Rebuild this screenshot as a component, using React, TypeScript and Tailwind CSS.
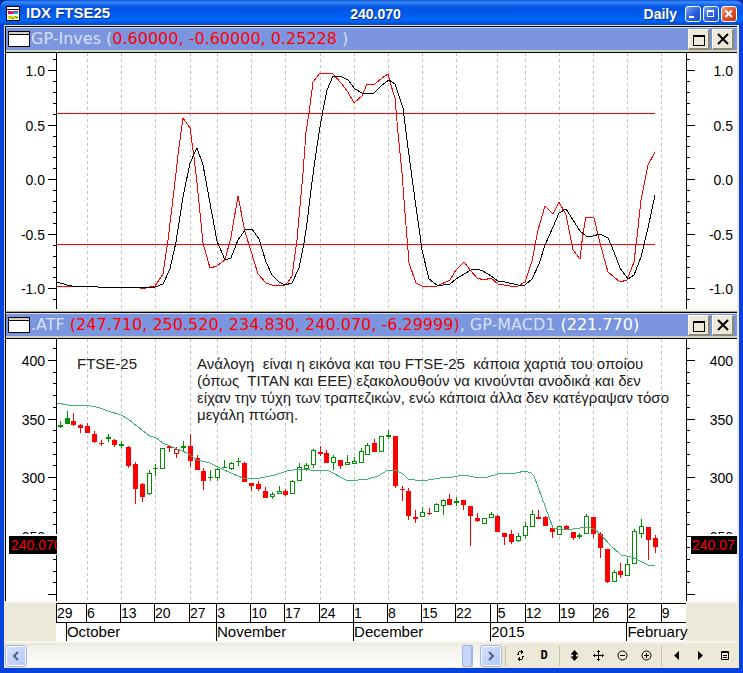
import React from "react";

type CandleKind = "down" | "up" | "flat" | "openDown";

// x, high, low, body top, body bottom, kind
type Candle = [number, number, number, number, number, CandleKind];

const gridLines = [
  87, 121, 155, 190, 217, 251, 285, 320, 354, 388, 422, 456, 497, 525, 559, 593,
  627, 661,
];

const fastLine =
  "57,286 72,286 98,287 139,287 140,288 146,288 153,286 155,286 163,274 168,240 172,207 176,173 179,147 183,118 190,128 194,157 197,183 203,243 210,268 217,266 225,260 231,237 238,196 245,232 251,251 258,274 266,283 272,285 285,285 288,282 292,276 297,240 299,217 303,173 306,132 309,113 313,82 320,73 333,74 341,83 348,92 354,103 362,96 367,84 375,84 382,78 388,74 390,82 395,98 398,133 402,173 405,213 408,250 409,263 416,283 422,286 430,287 437,286 450,280 456,270 464,262 471,271 477,278 484,280 491,278 498,284 504,285 510,286 518,286 525,282 532,261 538,230 545,206 553,214 559,202 566,215 573,250 580,259 583,233 586,217 594,218 600,243 608,272 620,282 627,280 634,262 637,237 641,200 645,180 648,165 655,152";

const slowLine =
  "57,282 67,285 72,286 98,287 155,287 163,284 170,269 176,242 183,197 190,163 197,148 203,165 210,203 217,241 225,260 231,258 238,240 245,230 252,229 259,239 266,262 272,275 279,282 285,285 292,283 299,268 304,243 307,223 311,190 315,160 319,133 323,110 327,90 333,76 340,76 348,80 355,89 362,93 367,94 374,93 382,85 389,80 395,84 403,108 407,140 411,170 416,207 419,228 422,250 429,279 437,285 443,285 450,284 456,279 464,274 471,270 477,269 483,271 491,276 498,281 505,282 518,285 525,285 532,279 539,264 545,245 553,227 559,213 566,209 573,220 580,231 586,236 593,236 600,234 608,238 614,252 620,268 628,279 634,275 641,257 648,228 655,195";

const macdLine =
  "57,403 68,405 87,405 100,408 108,411 121,415 128,419 138,427 150,436 156,438 163,443 177,449 187,453 197,460 210,463 220,468 233,474 243,478 260,478 275,475 287,471 300,469 310,470 327,470 348,481 368,479 378,476 388,470 397,471 403,474 408,479 422,481 440,478 453,477 463,475 480,478 488,477 498,474 516,473 525,471 531,473 534,476 553,528 563,530 573,529 588,527 594,529 601,535 610,545 621,555 631,557 636,559 648,565 655,566";

const candles: Candle[] = [
  [60, 421, 428, 425, 427, "flat"],
  [67, 411, 424, 418, 424, "flat"],
  [73, 413, 426, 421, 425, "down"],
  [80, 424, 433, 425, 428, "down"],
  [87, 423, 433, 426, 433, "down"],
  [94, 431, 443, 434, 442, "down"],
  [101, 440, 446, 443, 444, "down"],
  [108, 434, 442, 437, 439, "flat"],
  [114, 439, 447, 440, 445, "down"],
  [121, 441, 448, 444, 446, "flat"],
  [128, 446, 468, 447, 466, "down"],
  [135, 462, 504, 464, 489, "down"],
  [142, 483, 502, 484, 497, "down"],
  [149, 470, 495, 473, 494, "up"],
  [155, 464, 476, 468, 469, "flat"],
  [162, 448, 469, 448, 469, "up"],
  [169, 445, 452, 446, 448, "down"],
  [176, 447, 458, 449, 454, "openDown"],
  [183, 441, 451, 446, 448, "flat"],
  [190, 434, 467, 446, 461, "down"],
  [197, 455, 470, 458, 470, "down"],
  [203, 468, 490, 471, 481, "down"],
  [210, 470, 481, 477, 478, "flat"],
  [217, 468, 481, 469, 478, "up"],
  [224, 460, 468, 467, 468, "flat"],
  [231, 462, 470, 463, 469, "up"],
  [238, 458, 466, 461, 462, "flat"],
  [244, 462, 482, 463, 482, "down"],
  [251, 483, 491, 483, 486, "down"],
  [258, 481, 491, 484, 489, "down"],
  [265, 487, 498, 491, 498, "down"],
  [272, 492, 499, 494, 497, "up"],
  [279, 486, 494, 491, 494, "up"],
  [285, 489, 496, 491, 495, "down"],
  [292, 480, 494, 481, 494, "up"],
  [299, 463, 481, 467, 481, "up"],
  [306, 463, 471, 465, 469, "up"],
  [313, 449, 468, 450, 465, "up"],
  [320, 446, 456, 452, 454, "down"],
  [326, 450, 463, 453, 463, "down"],
  [333, 455, 470, 457, 463, "up"],
  [340, 460, 469, 460, 466, "down"],
  [347, 455, 465, 462, 465, "up"],
  [354, 457, 464, 461, 464, "up"],
  [361, 448, 463, 451, 463, "up"],
  [367, 443, 455, 445, 455, "up"],
  [374, 439, 452, 443, 452, "down"],
  [381, 436, 452, 436, 452, "up"],
  [388, 430, 439, 435, 437, "flat"],
  [395, 436, 488, 436, 486, "down"],
  [402, 486, 501, 489, 490, "down"],
  [408, 488, 520, 491, 516, "down"],
  [415, 510, 523, 517, 519, "down"],
  [422, 507, 517, 512, 517, "up"],
  [429, 508, 515, 513, 514, "down"],
  [436, 503, 512, 504, 512, "up"],
  [443, 499, 515, 500, 506, "up"],
  [449, 494, 505, 499, 505, "down"],
  [456, 497, 506, 501, 503, "flat"],
  [463, 500, 510, 500, 505, "down"],
  [470, 506, 546, 506, 516, "down"],
  [477, 513, 522, 518, 521, "down"],
  [484, 518, 524, 518, 524, "up"],
  [491, 512, 518, 514, 518, "up"],
  [497, 515, 532, 516, 532, "down"],
  [504, 533, 545, 533, 537, "down"],
  [511, 530, 544, 534, 542, "down"],
  [518, 533, 542, 536, 541, "up"],
  [525, 522, 538, 526, 536, "up"],
  [532, 510, 527, 514, 527, "up"],
  [538, 510, 519, 517, 519, "down"],
  [545, 516, 526, 517, 526, "down"],
  [552, 527, 538, 528, 532, "down"],
  [559, 526, 535, 526, 535, "up"],
  [566, 525, 530, 526, 529, "down"],
  [573, 532, 540, 532, 538, "down"],
  [579, 533, 539, 535, 537, "flat"],
  [586, 514, 534, 516, 534, "up"],
  [593, 517, 538, 517, 534, "down"],
  [600, 532, 558, 534, 548, "down"],
  [607, 549, 583, 549, 582, "down"],
  [614, 570, 582, 572, 582, "up"],
  [620, 563, 578, 571, 575, "down"],
  [627, 558, 576, 564, 576, "up"],
  [634, 529, 564, 531, 564, "up"],
  [641, 519, 538, 526, 534, "up"],
  [648, 527, 560, 527, 540, "down"],
  [655, 535, 553, 538, 547, "down"],
];

const weeks = [
  { label: "29", days: 30 },
  { label: "6", days: 34 },
  { label: "13", days: 34 },
  { label: "20", days: 35 },
  { label: "27", days: 27 },
  { label: "3", days: 34 },
  { label: "10", days: 34 },
  { label: "17", days: 35 },
  { label: "24", days: 34 },
  { label: "1", days: 34 },
  { label: "8", days: 34 },
  { label: "15", days: 34 },
  { label: "22", days: 35 },
  { label: "", days: 6 },
  { label: "5", days: 28 },
  { label: "12", days: 34 },
  { label: "19", days: 34 },
  { label: "26", days: 34 },
  { label: "2", days: 34 },
  { label: "9", days: 25 },
];

const months = [
  { label: "", days: 10 },
  { label: "October", days: 150 },
  { label: "November", days: 137 },
  { label: "December", days: 137 },
  { label: "2015", days: 136 },
  { label: "February", days: 59 },
];

const upperAxis = {
  top: 53,
  height: 256,
  first: 70,
  step: 54.6,
  labels: ["1.0", "0.5", "0.0", "-0.5", "-1.0"],
};

const lowerAxis = {
  top: 339,
  height: 262,
  first: 360,
  step: 58.5,
  labels: ["400", "350", "300", "250", ""],
};

function Axis(props: {
  side: "left" | "right";
  axis: typeof upperAxis;
  price?: string;
}) {
  const { top, height, first, step, labels } = props.axis;
  const left = props.side === "left";
  const ticks: React.ReactNode[] = [];
  for (let i = -1; i <= (labels.length - 1) * 5 + 1; i++) {
    const y = Math.round(first + (i * step) / 5);
    if (y < top || y >= top + height) continue;
    const size = i % 5 === 0 ? 8 : 3;
    ticks.push(
      <rect key={i} x={left ? 50 - size : 1} y={y} width={size} height="1" />
    );
  }

  return (
    <svg
      className="block w-[51px] shrink-0"
      height={height}
      viewBox={`0 ${top} 51 ${height}`}
      fontFamily="'Liberation Sans', Arial, sans-serif"
      fontSize="14"
    >
      <g shapeRendering="crispEdges">
        <rect x={left ? 50 : 0} y={top} width="1" height={height} />
        {ticks}
      </g>
      {labels.map((label, i) => (
        <text
          key={i}
          x={left ? 39 : 47}
          y={Math.round(first + i * step) + 6}
          textAnchor="end"
        >
          {label}
        </text>
      ))}
      {props.price && (
        <g>
          <rect x={left ? 3 : 5} y="534" width="48" height="21" fill="white" />
          <rect x={left ? 3 : 5} y="536" width="48" height="18" />
          <text x={left ? 5 : 6} y="550" fill="#ff0000">
            {props.price}
          </text>
        </g>
      )}
    </svg>
  );
}

function Plot(props: {
  top: number;
  height: number;
  label: string;
  children: React.ReactNode;
}) {
  return (
    <svg
      className="block w-full"
      height={props.height}
      viewBox={`57 ${props.top} 629 ${props.height}`}
      preserveAspectRatio="none"
      shapeRendering="crispEdges"
      role="img"
      aria-label={props.label}
    >
      {gridLines.map((x) => (
        <line
          key={x}
          x1={x + 0.5}
          x2={x + 0.5}
          y1={props.top}
          y2={props.top + props.height}
          stroke="#c0c0c0"
          strokeDasharray="3 3"
        />
      ))}
      {props.children}
    </svg>
  );
}

function CandleShape({ candle }: { candle: Candle }) {
  const [x, high, low, top, bottom, kind] = candle;
  const color = kind === "down" || kind === "openDown" ? "#ff0000" : "#009000";
  const open = kind === "up" || kind === "openDown";
  return (
    <g>
      <rect x={x} y={high} width="1" height={low - high} fill={color} />
      {open ? (
        <rect
          x={x - 1.5}
          y={top + 0.5}
          width="4"
          height={bottom - top - 1}
          fill="white"
          stroke={color}
        />
      ) : (
        <rect x={x - 2} y={top} width="5" height={bottom - top} fill={color} />
      )}
    </g>
  );
}

function PanelHeader(props: { name: string; children: React.ReactNode }) {
  return (
    <div className="border-y border-black">
      <div className="flex h-[25px] items-center border-t border-b-2 border-t-[#d8dcec] border-b-[#d4d0c0] bg-[#7b96df] pr-[3px] pl-[2px]">
        <span className="h-4 w-[22px] shrink-0 border border-black bg-white">
          <span className="block h-[3px] border-b border-black bg-[#d4d0c8]" />
        </span>
        <h2 className="flex-1 overflow-hidden pl-px font-['DejaVu_Sans',Verdana,sans-serif] text-base leading-[22px] whitespace-pre text-[#d6e0f8]">
          {props.children}
        </h2>
        <div className="flex gap-[2px]">
          <PanelButton label={`Maximize ${props.name}`}>
            <path d="M5 6h12v11H5zM6 8v8h10V8z" fillRule="evenodd" />
          </PanelButton>
          <PanelButton label={`Close ${props.name}`}>
            <path
              d="M6 5l10 10M16 5L6 15"
              stroke="black"
              strokeWidth="2"
              shapeRendering="auto"
            />
          </PanelButton>
        </div>
      </div>
    </div>
  );
}

function PanelButton(props: { label: string; children: React.ReactNode }) {
  return (
    <button
      aria-label={props.label}
      className="h-[21px] w-[22px] border border-r-2 border-b-2 border-t-white border-r-[#8c8979] border-b-[#8c8979] border-l-white bg-[#ece9d8]"
    >
      <svg
        className="-mt-px -ml-px block"
        width="22"
        height="21"
        viewBox="0 0 22 21"
        shapeRendering="crispEdges"
      >
        {props.children}
      </svg>
    </button>
  );
}

function WindowButton(props: {
  label: string;
  close?: boolean;
  children: React.ReactNode;
}) {
  return (
    <button
      aria-label={props.label}
      className={
        "h-4 w-4 rounded-[3px] border border-white " +
        (props.close
          ? "bg-linear-to-br from-[#f0a080] via-[#e0502c] to-[#c03010]"
          : "bg-linear-to-br from-[#7fa4f4] via-[#2f62e0] to-[#1a49c8]")
      }
    >
      <svg
        className="block"
        width="14"
        height="14"
        viewBox="0 0 14 14"
        fill="none"
        stroke="white"
        strokeWidth="2"
      >
        {props.children}
      </svg>
    </button>
  );
}

function ScrollButton(props: { label: string; path: string }) {
  return (
    <button
      aria-label={props.label}
      className="h-[22px] w-[22px] shrink-0 rounded-[3px] border border-[#9cb4e8] bg-linear-to-br from-[#d4e0fd] to-[#b4c8f8] shadow-[inset_0_0_0_1px_white]"
    >
      <svg
        className="mx-auto block"
        width="10"
        height="10"
        viewBox="0 0 10 10"
        fill="none"
        stroke="#4d6185"
        strokeWidth="2"
      >
        <path d={props.path} />
      </svg>
    </button>
  );
}

function ToolButton(props: { label: string; children: React.ReactNode }) {
  return (
    <button
      aria-label={props.label}
      className="flex h-[22px] w-6 items-center justify-center"
    >
      <svg
        width="11"
        height="11"
        viewBox="0 0 11 11"
        fill="none"
        stroke="black"
      >
        {props.children}
      </svg>
    </button>
  );
}

function Separator() {
  return (
    <span className="flex w-[6px] justify-center">
      <span className="h-5 w-px bg-[#c5c2b0]" />
    </span>
  );
}

function TitleBar() {
  return (
    <header className="grid h-[25px] grid-cols-[1fr_auto_1fr] items-center pt-[2px] pr-[6px] pl-[6px] font-['Liberation_Sans',Arial,sans-serif] font-bold text-white [text-shadow:1px_1px_0_#0a2f8c]">
      <div className="flex items-center gap-[6px]">
        <svg
          width="14"
          height="15"
          viewBox="0 0 14 15"
          shapeRendering="crispEdges"
        >
          <rect width="14" height="15" fill="black" />
          <rect x="1" y="1" width="12" height="2" fill="white" />
          <rect x="1" y="4" width="12" height="10" fill="white" />
          <rect x="2" y="5" width="10" height="3" fill="#ff0060" />
          <path d="M5 5h2v1H5zM8 6h4v2H7V7h1z" fill="#00b8f0" />
          <rect x="2" y="10" width="10" height="3" fill="#f0e000" />
          <path
            d="M3 10h1v1H3zM5 11h1v1H5zM6 12h2v1H6zM9 10h1v1H9zM10 11h2v1h-2z"
            fill="#00a040"
          />
        </svg>
        <h1 className="text-[15px]">IDX FTSE25</h1>
      </div>
      <span className="pl-2 text-sm">240.070</span>
      <div className="flex items-center justify-end">
        <span className="mr-2 text-sm">Daily</span>
        <div className="flex gap-[2px]">
          <WindowButton label="Minimize">
            <path d="M3 10h5" />
          </WindowButton>
          <WindowButton label="Maximize">
            <rect x="3.5" y="3.500" width="6" height="6" strokeWidth="1" />
            <path d="M3 4h7" />
          </WindowButton>
          <WindowButton label="Close" close>
            <path d="M3.500 3.500l6.500 6.500M10 3.500L3.500 10" />
          </WindowButton>
        </div>
      </div>
    </header>
  );
}

function DateAxis() {
  return (
    <div className="flex border-y-2 border-[#f6f5ee] bg-[#ece9d8] font-['Liberation_Sans',Arial,sans-serif] text-black">
      <div className="w-[51px] shrink-0" />
      <div className="-ml-px min-w-0 flex-1 border-t border-black bg-white">
        <div className="flex h-[19px] border-b border-black text-sm">
          {weeks.map((week, i) => (
            <div
              key={i}
              className="min-w-0 overflow-hidden border-l border-black leading-[18px]"
              style={{ flex: `${week.days} 0 0px` }}
            >
              {week.label}
            </div>
          ))}
        </div>
        <div className="flex h-[18px] text-[15px]">
          {months.map((month, i) => (
            <div
              key={i}
              className={
                "min-w-0 border-black leading-[18px] " +
                (month.label ? "border-l" : "")
              }
              style={{ flex: `${month.days} 0 0px` }}
            >
              {month.label}
            </div>
          ))}
        </div>
      </div>
      <div className="w-[51px] shrink-0" />
    </div>
  );
}

function BottomBar() {
  return (
    <div className="flex h-[25px] items-center bg-[#ece9d8] pr-[3px] pl-px">
      <div className="flex h-[22px] flex-1 bg-linear-to-b from-[#f0efea] to-[#fdfdfa]">
        <ScrollButton label="Scroll left" path="M7 1L3 5l4 4" />
        <div
          className="flex flex-1 justify-end pr-[7px]"
          role="scrollbar"
          aria-label="Time range"
          aria-controls="charts"
          aria-valuenow={100}
        >
          <span className="w-[11px] rounded-[2px] border border-r-2 border-[#9cb4e8] bg-[#c6d6fc]" />
        </div>
        <ScrollButton label="Scroll right" path="M3 1l4 4-4 4" />
      </div>
      <div className="flex items-center">
        <Separator />
        <ToolButton label="Refresh">
          <g fill="black" stroke="none" shapeRendering="crispEdges">
            <path d="M4 1h3v1H4zM3 2h1v3H3zM2 4h1v1H2zM6 0h1v4H6zM7 1h1v2H7z" />
            <path d="M4 9h3v1H4zM7 6h1v3H7zM8 6h1v1H8zM4 7h1v4H4zM3 8h1v2H3z" />
          </g>
        </ToolButton>
        <button
          aria-label="Daily periodicity"
          className="h-[22px] w-6 font-['Liberation_Mono',monospace] text-xs font-bold"
        >
          D
        </button>
        <Separator />
        <ToolButton label="Stretch vertically">
          <path
            d="M5.500 0L9.500 4.500H7v2h2.500L5.500 11l-4-4.500H4v-2H1.500z"
            fill="black"
            stroke="none"
          />
        </ToolButton>
        <ToolButton label="Move">
          <g fill="black" stroke="none" shapeRendering="crispEdges">
            <path d="M5 0h1v11H5zM0 5h11v1H0z" />
            <path d="M4 1h3v1H4zM4 9h3v1H4zM1 4h1v3H1zM9 4h1v3H9z" />
          </g>
        </ToolButton>
        <ToolButton label="Zoom out">
          <circle cx="5.5" cy="5.500" r="4.500" />
          <path d="M3 5.500h5" />
        </ToolButton>
        <ToolButton label="Zoom in">
          <circle cx="5.5" cy="5.500" r="4.500" />
          <path d="M3 5.500h5M5.500 3v5" />
        </ToolButton>
        <Separator />
        <ToolButton label="Previous">
          <path d="M8 1v9L3 5.500z" fill="black" stroke="none" />
        </ToolButton>
        <ToolButton label="Next">
          <path d="M3 1v9l5-4.500z" fill="black" stroke="none" />
        </ToolButton>
        <ToolButton label="Data window">
          <path d="M2.500 1.500h7v8h-7zM2 2.500h8M4 5.500h4M4 7.500h4" />
        </ToolButton>
      </div>
    </div>
  );
}

export default function App() {
  return (
    <main className="w-full bg-[#0a2a9c]">
      <div className="overflow-hidden rounded-t-lg bg-[linear-gradient(180deg,#0a4fd8_0px,#3c8cf8_2px,#0a5ce8_6px,#0054e3_10px,#0068ff_20px,#0046c8_25px,#0842dc_26px)]">
        <TitleBar />
        <div className="border-x-4 border-b-[5px] border-[#0842dc] bg-[#ece9d8] pt-px text-black">
          <div id="charts" className="border-l border-[#d8d5c4] pr-[2px]">
            <div className="border-l border-black">
              <section>
                <PanelHeader name="GP-Inves">
                  GP-Inves (
                  <span className="text-[#ff0000]">
                    0.60000, -0.60000, 0.25228
                  </span>
                  {" )"}
                </PanelHeader>
                <div className="flex bg-white">
                  <Axis side="left" axis={upperAxis} />
                  <div className="min-w-0 flex-1">
                    <Plot top={53} height={256} label="GP-Inves oscillator">
                      <g fill="none" stroke="#ff0000">
                        <path d="M57 113.500H655M57 244.500H655" />
                        <polyline points={fastLine} />
                      </g>
                      <polyline points={slowLine} fill="none" stroke="black" />
                    </Plot>
                  </div>
                  <Axis side="right" axis={upperAxis} />
                </div>
              </section>
              <div className="h-[3px] border-b border-[#aca899] bg-[#f4f3ec]" />
              <section>
                <PanelHeader name="GP-MACD1">
                  {".ATF "}
                  <span className="text-[#ff0000]">
                    (247.710, 250.520, 234.830, 240.070, -6.29999)
                  </span>
                  {", GP-MACD1 "}
                  <span className="text-white">(221.770)</span>
                </PanelHeader>
                <div className="flex bg-white">
                  <Axis side="left" axis={lowerAxis} price="240.070" />
                  <div className="relative min-w-0 flex-1">
                    <Plot top={339} height={262} label="FTSE-25 daily candles">
                      {candles.map((candle) => (
                        <CandleShape key={candle[0]} candle={candle} />
                      ))}
                      <polyline
                        points={macdLine}
                        fill="none"
                        stroke="#3cb371"
                      />
                    </Plot>
                    <div className="absolute inset-x-5 top-4 flex font-['Liberation_Sans',Arial,sans-serif] text-[15px] leading-[17px] text-[#202020]">
                      <p className="w-[120px] shrink-0">FTSE-25</p>
                      <p className="whitespace-pre">
                        {"Ανάλογη  είναι η εικόνα και του FTSE-25  κάποια χαρτιά του οποίου\n" +
                          "(όπως  ΤΙΤΑΝ και ΕΕΕ) εξακολουθούν να κινούνται ανοδικά και δεν\n" +
                          "είχαν την τύχη των τραπεζικών, ενώ κάποια άλλα δεν κατέγραψαν τόσο\n" +
                          "μεγάλη πτώση."}
                      </p>
                    </div>
                  </div>
                  <Axis side="right" axis={lowerAxis} price="240.07" />
                </div>
              </section>
            </div>
          </div>
          <div className="pr-[2px] pl-[2px]">
            <DateAxis />
          </div>
          <BottomBar />
        </div>
      </div>
    </main>
  );
}
